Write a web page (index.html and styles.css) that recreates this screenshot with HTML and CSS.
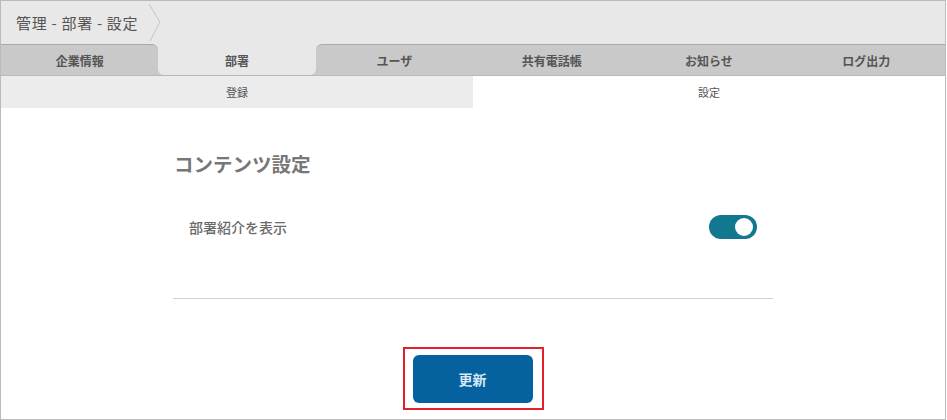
FILE: index.html
```html
<!DOCTYPE html>
<html lang="ja">

<head>
    <meta charset="UTF-8">
    <meta name="viewport" content="width=device-width, initial-scale=1.0">
    <title>管理 - 部署 - 設定</title>
    <link rel="stylesheet" href="styles.css">
</head>

<body>
    <div class="frame">
        <div class="breadcrumb">
            <span class="crumb-text">管理 - 部署 - 設定</span>
            <svg class="crumb-arrow" width="14" height="40" viewBox="0 0 14 40">
                <polyline points="1,1 12,19 2,38" fill="none" stroke="#c4c4c4" stroke-width="1" />
            </svg>
        </div>

        <div class="tabs">
            <div class="tab before-active">企業情報</div>
            <div class="tab-holder">
                <div class="tab active">部署</div>
            </div>
            <div class="tab after-active">ユーザ</div>
            <div class="tab">共有電話帳</div>
            <div class="tab">お知らせ</div>
            <div class="tab">ログ出力</div>
        </div>

        <div class="subtabs">
            <div class="subtab">登録</div>
            <div class="subtab current">設定</div>
        </div>

        <div class="content">
            <h2 class="section-title">コンテンツ設定</h2>
            <div class="setting-row">
                <span class="setting-label">部署紹介を表示</span>
                <span class="switch on"><span class="knob"></span></span>
            </div>
            <hr class="divider">
            <div class="actions">
                <div class="highlight">
                    <button class="btn-update">更新</button>
                </div>
            </div>
        </div>
    </div>
</body>

</html>
```

FILE: styles.css
```css
* {
    margin: 0;
    padding: 0;
    box-sizing: border-box;
}

body {
    font-family: "Noto Sans CJK JP", "Noto Sans", sans-serif;
    background: #fff;
    color: #555;
}

.frame {
    width: 946px;
    height: 420px;
    border: 1px solid #bbb;
    background: #fff;
    overflow: hidden;
}

/* breadcrumb */
.breadcrumb {
    height: 43px;
    background: #e8e8e8;
    display: flex;
    align-items: center;
    padding-left: 15px;
}

.crumb-text {
    font-size: 15px;
    color: #555;
    letter-spacing: 0.7px;
}

.crumb-arrow {
    margin-left: 10px;
    margin-top: 1px;
}

/* main tabs */
.tabs {
    display: grid;
    grid-template-columns: repeat(6, 1fr);
    height: 32px;
    background: #e8e8e8;
    border-bottom: 1px solid #b8b8b8;
}

.tab {
    background: #c9c9c9;
    border-top: 1px solid #a9a9a9;
    font-size: 12px;
    font-weight: bold;
    color: #555;
    display: flex;
    justify-content: center;
    align-items: center;
}

.tab.before-active {
    border-top-right-radius: 6px;
}

.tab.after-active {
    border-top-left-radius: 6px;
}

.tab-holder {
    background: #c9c9c9;
}

.tab.active {
    height: 100%;
    background: #e8e8e8;
    border-top: none;
    border-radius: 0 0 6px 6px;
    padding-top: 1px;
}

/* sub tabs */
.subtabs {
    display: grid;
    grid-template-columns: 1fr 1fr;
    height: 32px;
}

.subtab {
    background: #ececec;
    font-size: 11px;
    color: #555;
    display: flex;
    justify-content: center;
    align-items: center;
}

.subtab.current {
    background: #fff;
}

/* content */
.content {
    width: 600px;
    margin: 0 auto;
}

.section-title {
    font-size: 19.5px;
    font-weight: bold;
    color: #777;
    margin-top: 42px;
    padding-left: 1px;
    line-height: 28px;
}

.setting-row {
    display: flex;
    justify-content: space-between;
    align-items: center;
    padding: 0 16px 0 16px;
    margin-top: 35px;
    height: 28px;
}

.setting-label {
    font-size: 14px;
    font-weight: 500;
    color: #6a6a6a;
}

.switch {
    width: 48px;
    height: 24px;
    border-radius: 12px;
    background: #11788f;
    position: relative;
}

.switch .knob {
    position: absolute;
    top: 3px;
    right: 4px;
    width: 18px;
    height: 18px;
    border-radius: 50%;
    background: #fff;
}

.divider {
    border: none;
    border-top: 1px solid #cfcfcf;
    margin-top: 57px;
}

.actions {
    display: flex;
    justify-content: center;
    margin-top: 48px;
}

.highlight {
    border: 2px solid #e3202b;
    padding: 6px 9px 5px 8px;
}

.btn-update {
    width: 120px;
    height: 48px;
    border: none;
    border-radius: 6px;
    background: #05629f;
    color: #d6e8f6;
    font-family: "Noto Sans CJK JP", "Noto Sans", sans-serif;
    font-size: 14px;
    font-weight: bold;
    cursor: pointer;
}
```
